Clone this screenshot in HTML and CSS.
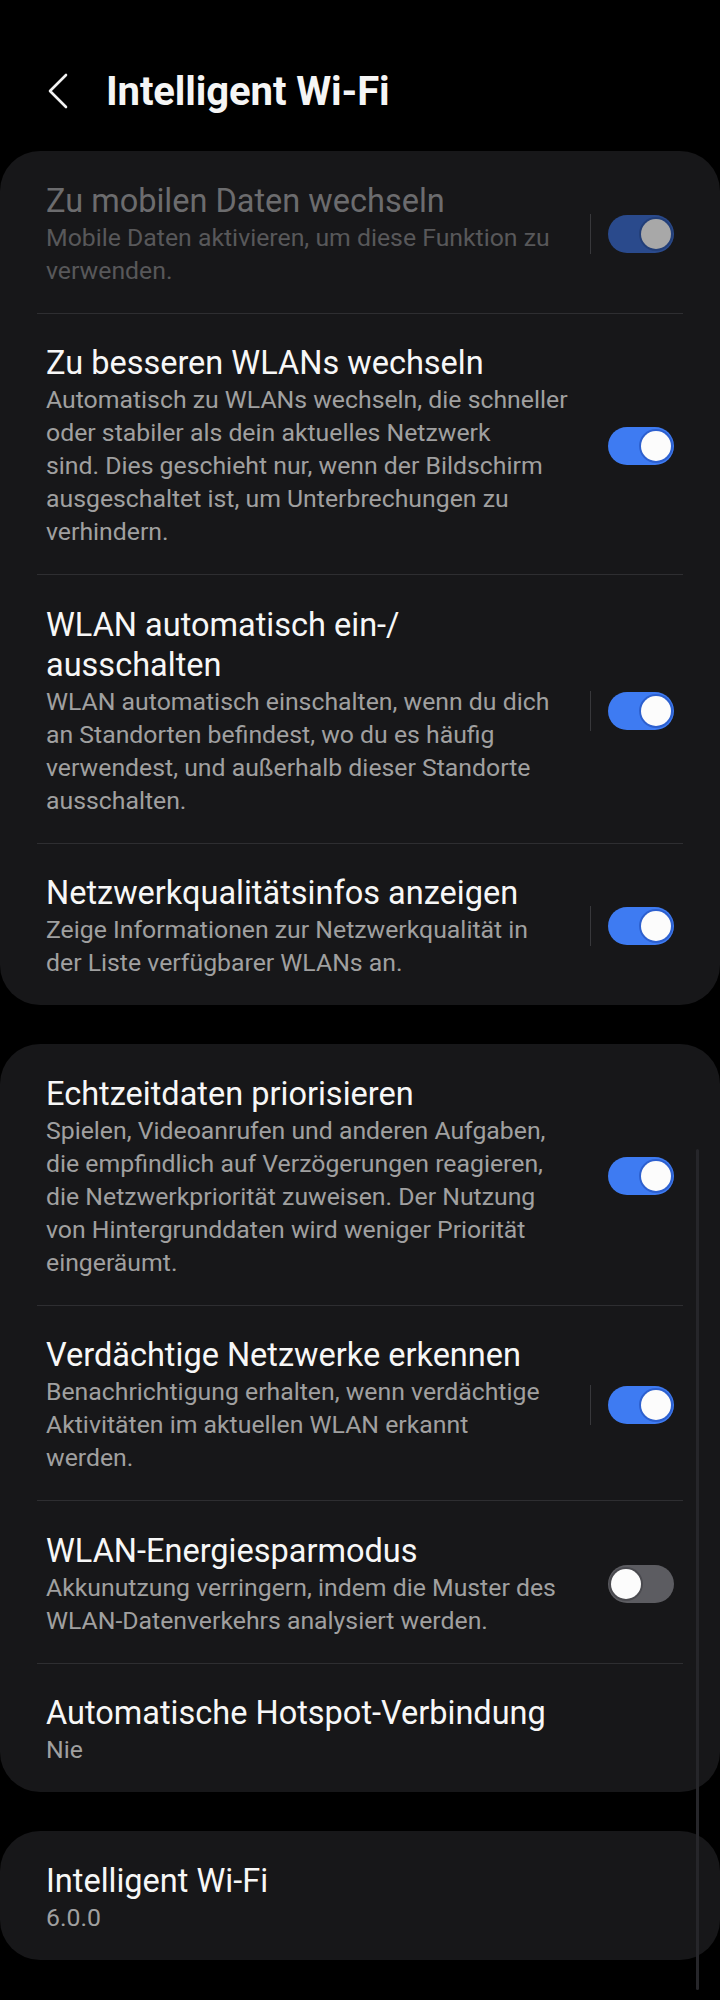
FILE: index.html
```html
<!DOCTYPE html>
<html lang="de">
    <head>
        <meta charset="UTF-8">
        <meta name="viewport" content="width=device-width, initial-scale=1.0">
        <title>Intelligent Wi-Fi</title>
        <link rel="stylesheet" href="styles.css">
    </head>
    <body>
        <header class="topbar">
            <svg class="back" width="24" height="36" viewBox="0 0 24 36">
                <path d="M20 2 L4 18 L20 34" fill="none" stroke="#f2f2f2" stroke-width="2.6" stroke-linecap="round" stroke-linejoin="round"/>
            </svg>
            <h1>Intelligent Wi-Fi</h1>
        </header>

        <section class="card">
            <div class="row disabled">
                <div class="text">
                    <div class="title">Zu mobilen Daten wechseln</div>
                    <div class="desc">Mobile Daten aktivieren, um diese Funktion zu<br>verwenden.</div>
                </div>
                <span class="divider"></span>
                <span class="switch on"><span class="knob"></span></span>
            </div>
            <div class="row">
                <div class="text">
                    <div class="title">Zu besseren WLANs wechseln</div>
                    <div class="desc">Automatisch zu WLANs wechseln, die schneller<br>oder stabiler als dein aktuelles Netzwerk<br>sind. Dies geschieht nur, wenn der Bildschirm<br>ausgeschaltet ist, um Unterbrechungen zu<br>verhindern.</div>
                </div>
                <span class="divider hidden"></span>
                <span class="switch on"><span class="knob"></span></span>
            </div>
            <div class="row">
                <div class="text">
                    <div class="title">WLAN automatisch ein-/<br>ausschalten</div>
                    <div class="desc">WLAN automatisch einschalten, wenn du dich<br>an Standorten befindest, wo du es häufig<br>verwendest, und außerhalb dieser Standorte<br>ausschalten.</div>
                </div>
                <span class="divider"></span>
                <span class="switch on"><span class="knob"></span></span>
            </div>
            <div class="row">
                <div class="text">
                    <div class="title">Netzwerkqualitätsinfos anzeigen</div>
                    <div class="desc">Zeige Informationen zur Netzwerkqualität in<br>der Liste verfügbarer WLANs an.</div>
                </div>
                <span class="divider"></span>
                <span class="switch on"><span class="knob"></span></span>
            </div>
        </section>

        <section class="card">
            <div class="row">
                <div class="text">
                    <div class="title">Echtzeitdaten priorisieren</div>
                    <div class="desc">Spielen, Videoanrufen und anderen Aufgaben,<br>die empfindlich auf Verzögerungen reagieren,<br>die Netzwerkpriorität zuweisen. Der Nutzung<br>von Hintergrunddaten wird weniger Priorität<br>eingeräumt.</div>
                </div>
                <span class="divider hidden"></span>
                <span class="switch on"><span class="knob"></span></span>
            </div>
            <div class="row">
                <div class="text">
                    <div class="title">Verdächtige Netzwerke erkennen</div>
                    <div class="desc">Benachrichtigung erhalten, wenn verdächtige<br>Aktivitäten im aktuellen WLAN erkannt<br>werden.</div>
                </div>
                <span class="divider"></span>
                <span class="switch on"><span class="knob"></span></span>
            </div>
            <div class="row">
                <div class="text">
                    <div class="title">WLAN-Energiesparmodus</div>
                    <div class="desc">Akkunutzung verringern, indem die Muster des<br>WLAN-Datenverkehrs analysiert werden.</div>
                </div>
                <span class="divider hidden"></span>
                <span class="switch"><span class="knob"></span></span>
            </div>
            <div class="row">
                <div class="text">
                    <div class="title">Automatische Hotspot-Verbindung</div>
                    <div class="desc">Nie</div>
                </div>
            </div>
        </section>

        <section class="card">
            <div class="row">
                <div class="text">
                    <div class="title">Intelligent Wi-Fi</div>
                    <div class="desc">6.0.0</div>
                </div>
            </div>
        </section>

        <div class="scrollbar"></div>
    </body>
</html>
```

FILE: styles.css
```css
body {
    font-family: Roboto, "Noto Sans", sans-serif;
    background: #000;
    color: #f5f5f5;
    margin: 0;
    position: relative;
    min-height: 2000px;
}
.topbar {
    display: flex;
    align-items: center;
    height: 50px;
    padding: 66px 0 35px 46px;
}
.topbar .back {
    display: block;
    margin-right: 36px;
}
.topbar h1 {
    margin: 0;
    font-size: 40px;
    font-weight: bold;
    letter-spacing: -0.1px;
}
.card {
    background: #171719;
    border-radius: 40px;
    padding: 0 37px;
    margin-bottom: 39px;
}
.row {
    display: flex;
    align-items: center;
    padding: 29.5px 9px 26px;
}
.row + .row {
    border-top: 1px solid #2e2e31;
}
.text {
    flex: 1;
    min-width: 0;
}
.title {
    font-size: 32.5px;
    line-height: 40px;
    color: #f7f7f7;
    white-space: nowrap;
}
.desc {
    font-size: 24.8px;
    line-height: 33px;
    color: #a0a0a0;
    white-space: nowrap;
}
.disabled .title {
    color: #6c6c6e;
}
.disabled .desc {
    color: #58585a;
}
.divider {
    width: 1px;
    height: 40px;
    background: #38383b;
    margin: 0 17px 0 14px;
}
.divider.hidden {
    background: transparent;
}
.switch {
    width: 66px;
    height: 38px;
    box-sizing: border-box;
    border-radius: 19px;
    padding: 0 3px;
    display: flex;
    align-items: center;
    justify-content: flex-start;
    background: #5c5c61;
    flex-shrink: 0;
}
.switch .knob {
    width: 30px;
    height: 30px;
    border-radius: 50%;
    background: #fcfcfc;
    box-shadow: 0 0 0 2px #4a4a4f;
}
.switch.on {
    justify-content: flex-end;
    background: #3e7bf2;
}
.switch.on .knob {
    box-shadow: 0 0 0 2px #2d60cf;
}
.disabled .switch.on {
    background: #2a4a8c;
}
.disabled .switch.on .knob {
    background: #a8a8a8;
    box-shadow: 0 0 0 2px #233f78;
}
.scrollbar {
    position: absolute;
    left: 696px;
    top: 1149px;
    width: 3px;
    height: 841px;
    border-radius: 2px;
    background: #26262a;
}
```
